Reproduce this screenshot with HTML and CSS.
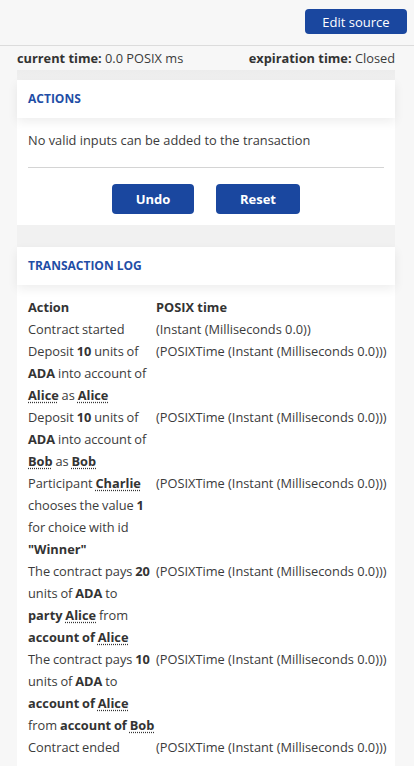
FILE: index.html
```html
<!DOCTYPE html>
<html lang="en">
<head>
    <meta charset="UTF-8">
    <meta name="viewport" content="width=device-width, initial-scale=1.0">
    <title>Marlowe Simulation</title>
    <link rel="stylesheet" href="styles.css">
</head>
<body>
    <header class="topbar">
        <button class="btn btn-small">Edit source</button>
    </header>

    <div class="times">
        <span><b>current time:</b> 0.0 POSIX ms</span>
        <span><b>expiration time:</b> Closed</span>
    </div>

    <main class="panels">
        <section class="card">
            <h2 class="card-title">Actions</h2>
            <div class="card-body">
                <p class="note">No valid inputs can be added to the transaction</p>
                <hr class="divider">
                <div class="buttons">
                    <button class="btn btn-wide">Undo</button>
                    <button class="btn btn-wide">Reset</button>
                </div>
            </div>
        </section>

        <section class="card">
            <h2 class="card-title">Transaction log</h2>
            <div class="card-body">
                <table class="log">
                    <colgroup>
                        <col class="col-action">
                        <col>
                    </colgroup>
                    <thead>
                        <tr>
                            <th>Action</th>
                            <th>POSIX time</th>
                        </tr>
                    </thead>
                    <tbody>
                        <tr>
                            <td>Contract started</td>
                            <td>(Instant (Milliseconds 0.0))</td>
                        </tr>
                        <tr>
                            <td>Deposit <b>10</b> units of <b>ADA</b> into account of <b><abbr title="Alice">Alice</abbr></b> as <b><abbr title="Alice">Alice</abbr></b></td>
                            <td>(POSIXTime (Instant (Milliseconds 0.0)))</td>
                        </tr>
                        <tr>
                            <td>Deposit <b>10</b> units of <b>ADA</b> into account of <b><abbr title="Bob">Bob</abbr></b> as <b><abbr title="Bob">Bob</abbr></b></td>
                            <td>(POSIXTime (Instant (Milliseconds 0.0)))</td>
                        </tr>
                        <tr>
                            <td>Participant <b><abbr title="Charlie">Charlie</abbr></b> chooses the value <b>1</b> for choice with id <b>"Winner"</b></td>
                            <td>(POSIXTime (Instant (Milliseconds 0.0)))</td>
                        </tr>
                        <tr>
                            <td>The contract pays <b>20</b> units of <b>ADA</b> to <b>party <abbr title="Alice">Alice</abbr></b> from <b>account of <abbr title="Alice">Alice</abbr></b></td>
                            <td>(POSIXTime (Instant (Milliseconds 0.0)))</td>
                        </tr>
                        <tr>
                            <td>The contract pays <b>10</b> units of <b>ADA</b> to <b>account of <abbr title="Alice">Alice</abbr></b> from <b>account of <abbr title="Bob">Bob</abbr></b></td>
                            <td>(POSIXTime (Instant (Milliseconds 0.0)))</td>
                        </tr>
                        <tr>
                            <td>Contract ended</td>
                            <td>(POSIXTime (Instant (Milliseconds 0.0)))</td>
                        </tr>
                    </tbody>
                </table>
            </div>
        </section>
    </main>
</body>
</html>
```

FILE: styles.css
```css
/* Simulation panel */
body {
    font-family: "Open Sans", "Liberation Sans", sans-serif;
    font-size: 12.8px;
    line-height: 22px;
    color: #3b3b3b;
    margin: 0;
    padding: 0;
    background-color: #f7f7f7;
}
.topbar {
    height: 46px;
    border-bottom: 1px solid #dcdcdc;
    display: flex;
    justify-content: flex-end;
    align-items: flex-start;
    padding: 9px 7px 0 0;
    box-sizing: border-box;
}
.btn {
    font-family: inherit;
    background-color: #1a479f;
    color: #fff;
    border: none;
    border-radius: 4px;
    cursor: pointer;
}
.btn-small {
    width: 102px;
    height: 25px;
    font-size: 13px;
    padding: 0;
}
.btn-wide {
    height: 30px;
    font-size: 13px;
    font-weight: bold;
    padding: 0;
}
.btn-wide:first-child {
    width: 82px;
}
.btn-wide:last-child {
    width: 84px;
}
.times {
    display: flex;
    justify-content: space-between;
    padding: 1px 19px 1px 17px;
}
.times b {
    color: #333;
}
.panels {
    margin: 0 19px 0 17px;
    padding-top: 10px;
    background: linear-gradient(#ececec, #f1f1f1 12px);
    display: flex;
    flex-direction: column;
    gap: 22px;
}
.card {
    background-color: #fff;
}
.card-title {
    margin: 0;
    height: 38px;
    line-height: 38px;
    padding: 0 11px;
    font-size: 12px;
    font-weight: bold;
    text-transform: uppercase;
    color: #1f4ea6;
    box-shadow: 0 4px 10px rgba(0, 0, 0, 0.07);
    position: relative;
}
.card-body {
    padding: 11px;
}
.note {
    margin: 0;
}
.divider {
    border: none;
    border-top: 1px solid #d4d4d4;
    margin: 16px 0 16px;
}
.buttons {
    display: flex;
    justify-content: center;
    gap: 22px;
}
.log {
    width: 100%;
    border-collapse: collapse;
    table-layout: fixed;
}
.col-action {
    width: 128px;
}
.log th {
    text-align: left;
    font-weight: bold;
    color: #333;
    padding: 0;
}
.log td {
    padding: 0;
    vertical-align: top;
}
.log td:first-child {
    word-spacing: -0.5px;
}
.log th + th,
.log td + td {
    white-space: nowrap;
}
.log b {
    color: #333;
    white-space: nowrap;
}
abbr {
    text-decoration: underline dotted;
    text-underline-offset: 2px;
}
```
